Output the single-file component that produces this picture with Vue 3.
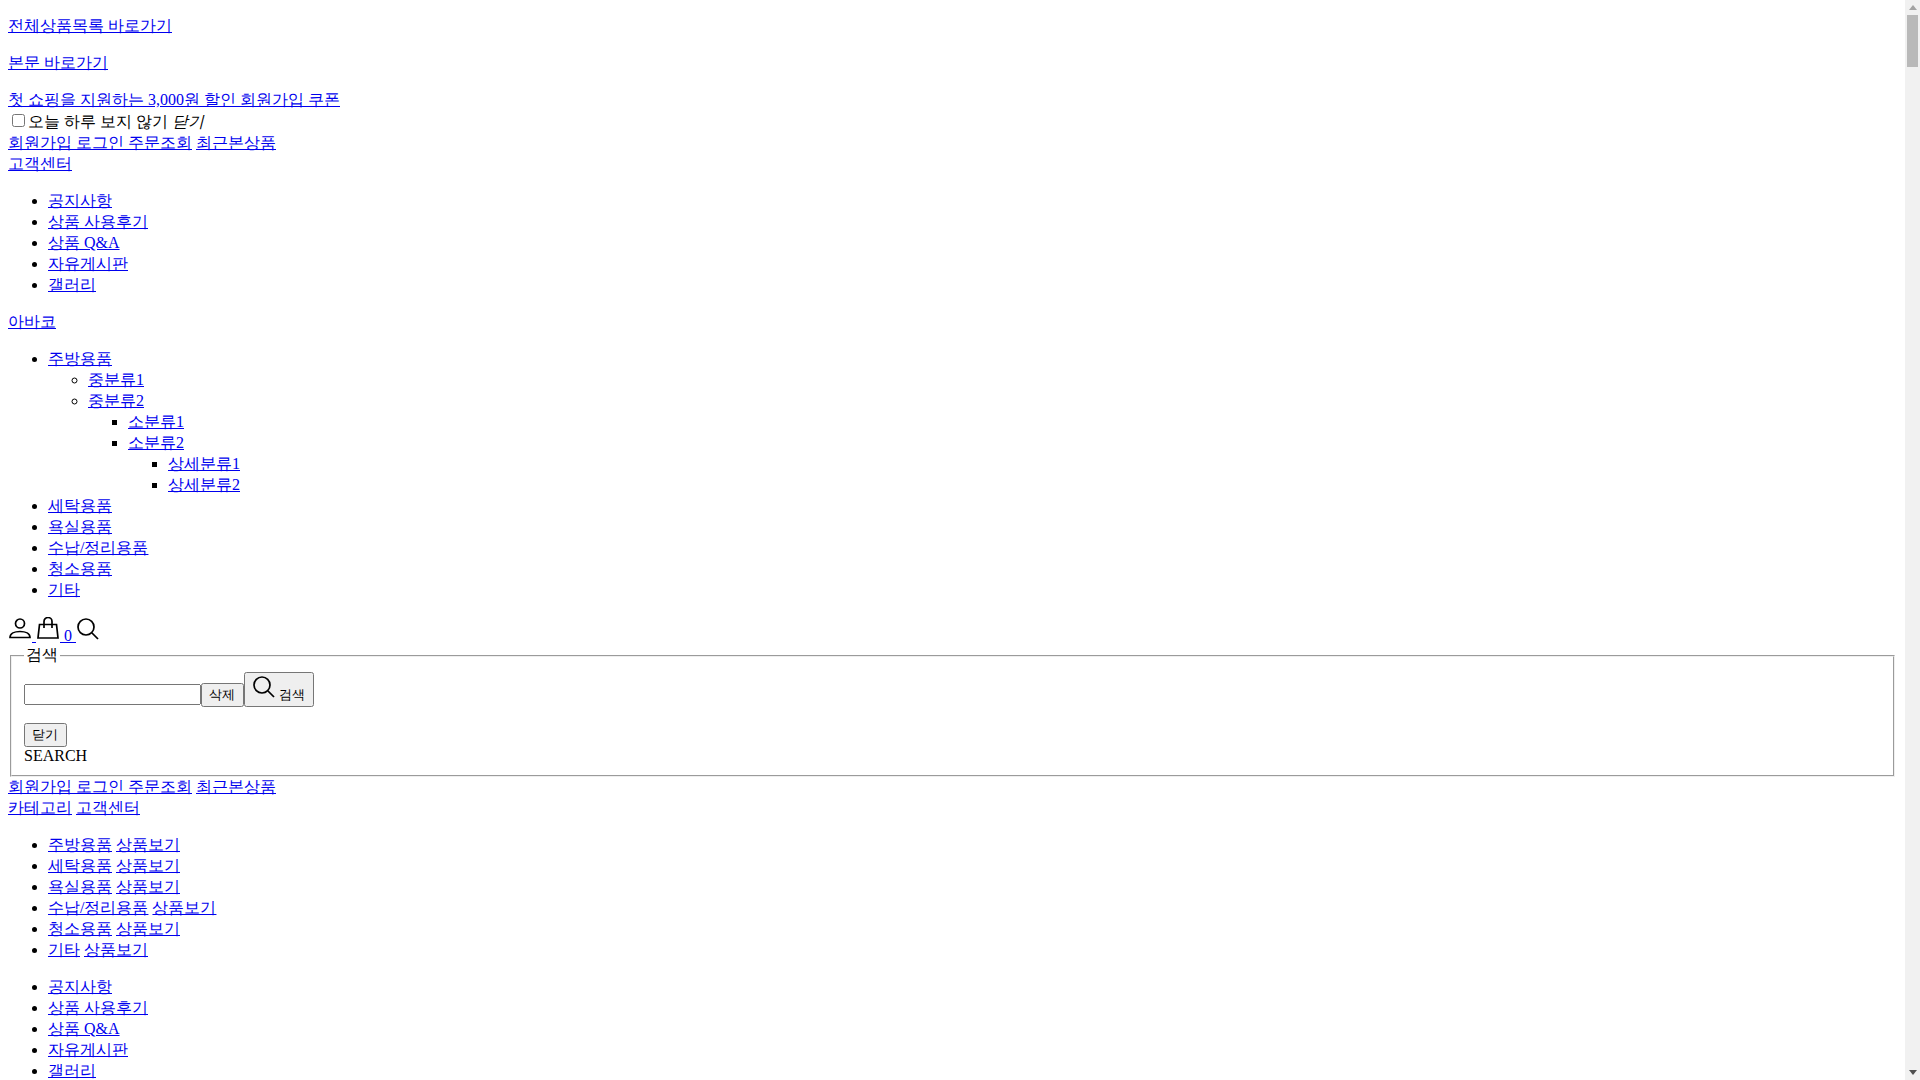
<script setup>
const topLinks = ['공지사항', '상품 사용후기', '상품 Q&A', '자유게시판', '갤러리']
const cats = ['주방용품', '세탁용품', '욕실용품', '수납/정리용품', '청소용품', '기타']
</script>

<template>
  <div class="window" lang="ko">
    <div class="page">
      <p><a href="#">전체상품목록 바로가기</a></p>
      <p><a href="#">본문 바로가기</a></p>
      <div><a href="#">첫 쇼핑을 지원하는 3,000원 할인 회원가입 쿠폰</a></div>
      <div><input type="checkbox" /><label>오늘 하루 보지 않기</label> <i>닫기</i></div>
      <div><a href="#">회원가입 로그인 주문조회</a> <a href="#">최근본상품</a></div>
      <div><a href="#">고객센터</a></div>
      <ul>
        <li v-for="t in topLinks" :key="t"><a href="#">{{ t }}</a></li>
      </ul>
      <p><a href="#">아바코</a></p>
      <ul>
        <li>
          <a href="#">주방용품</a>
          <ul>
            <li><a href="#">중분류1</a></li>
            <li>
              <a href="#">중분류2</a>
              <ul>
                <li><a href="#">소분류1</a></li>
                <li>
                  <a href="#">소분류2</a>
                  <ul>
                    <li><a href="#">상세분류1</a></li>
                    <li><a href="#">상세분류2</a></li>
                  </ul>
                </li>
              </ul>
            </li>
          </ul>
        </li>
        <li v-for="c in cats.slice(1)" :key="c"><a href="#">{{ c }}</a></li>
      </ul>
      <div><a href="#"><svg class="ico" viewBox="0 0 24 24" fill="none" stroke="#000" stroke-width="1.7"><circle cx="12" cy="6.500" r="4.500" /><path d="M2 20.500c0-4 4.500-6 10-6s10 2 10 6z" /></svg>{{ ' ' }}</a><a href="#"><svg class="ico" viewBox="0 0 24 24" fill="none" stroke="#000" stroke-width="1.700"><path d="M3.500 7.500h17l1.500 13.500H2z" /><path d="M8 11V4.500a4 4 0 0 1 8 0V11" /></svg>{{ ' 0 ' }}</a><a href="#"><svg class="ico" viewBox="0 0 24 24" fill="none" stroke="#000" stroke-width="1.700"><circle cx="10" cy="10" r="8" /><path d="M16 16l6 6" /></svg></a></div>
      <fieldset>
        <legend>검색</legend>
        <div class="row"><input class="q" type="text" /><button>삭제</button><button><svg class="ico" viewBox="0 0 24 24" fill="none" stroke="#000" stroke-width="1.700"><circle cx="10" cy="10" r="8" /><path d="M16 16l6 6" /></svg> 검색</button></div>
        <button>닫기</button>
        <div>SEARCH</div>
      </fieldset>
      <div><a href="#">회원가입 로그인 주문조회</a> <a href="#">최근본상품</a></div>
      <div><a href="#">카테고리</a> <a href="#">고객센터</a></div>
      <ul>
        <li v-for="c in cats" :key="c"><a href="#">{{ c }}</a> <a href="#">상품보기</a></li>
      </ul>
      <ul>
        <li v-for="t in topLinks" :key="t"><a href="#">{{ t }}</a></li>
      </ul>
    </div>
    <div class="scrollbar">
      <span class="arrow up"></span>
      <span class="thumb"></span>
      <span class="track"></span>
      <span class="arrow down"></span>
    </div>
  </div>
</template>

<style scoped>
.window { display: flex; height: 1080px; overflow: hidden; }
.page { flex: 1; min-width: 0; padding: 0 8px; }
.ico { width: 24px; height: 24px; }
.row { margin-bottom: 16px; }
.q { width: 177px; box-sizing: border-box; }
button { padding: 1px 6.25px; }
.scrollbar { width: 15px; flex: none; background: #f1f1f1; display: flex; flex-direction: column; align-items: center; }
.arrow { width: 0; height: 0; border-left: 4px solid transparent; border-right: 4px solid transparent; }
.up { border-bottom: 5px solid #a3a3a3; margin-top: 5px; margin-bottom: 5px; }
.thumb { width: 11px; height: 52px; background: #b9b9b9; }
.track { flex: 1; }
.down { border-top: 5px solid #505050; margin-bottom: 5px; }
</style>
<style>
body { margin: 0; }
</style>
